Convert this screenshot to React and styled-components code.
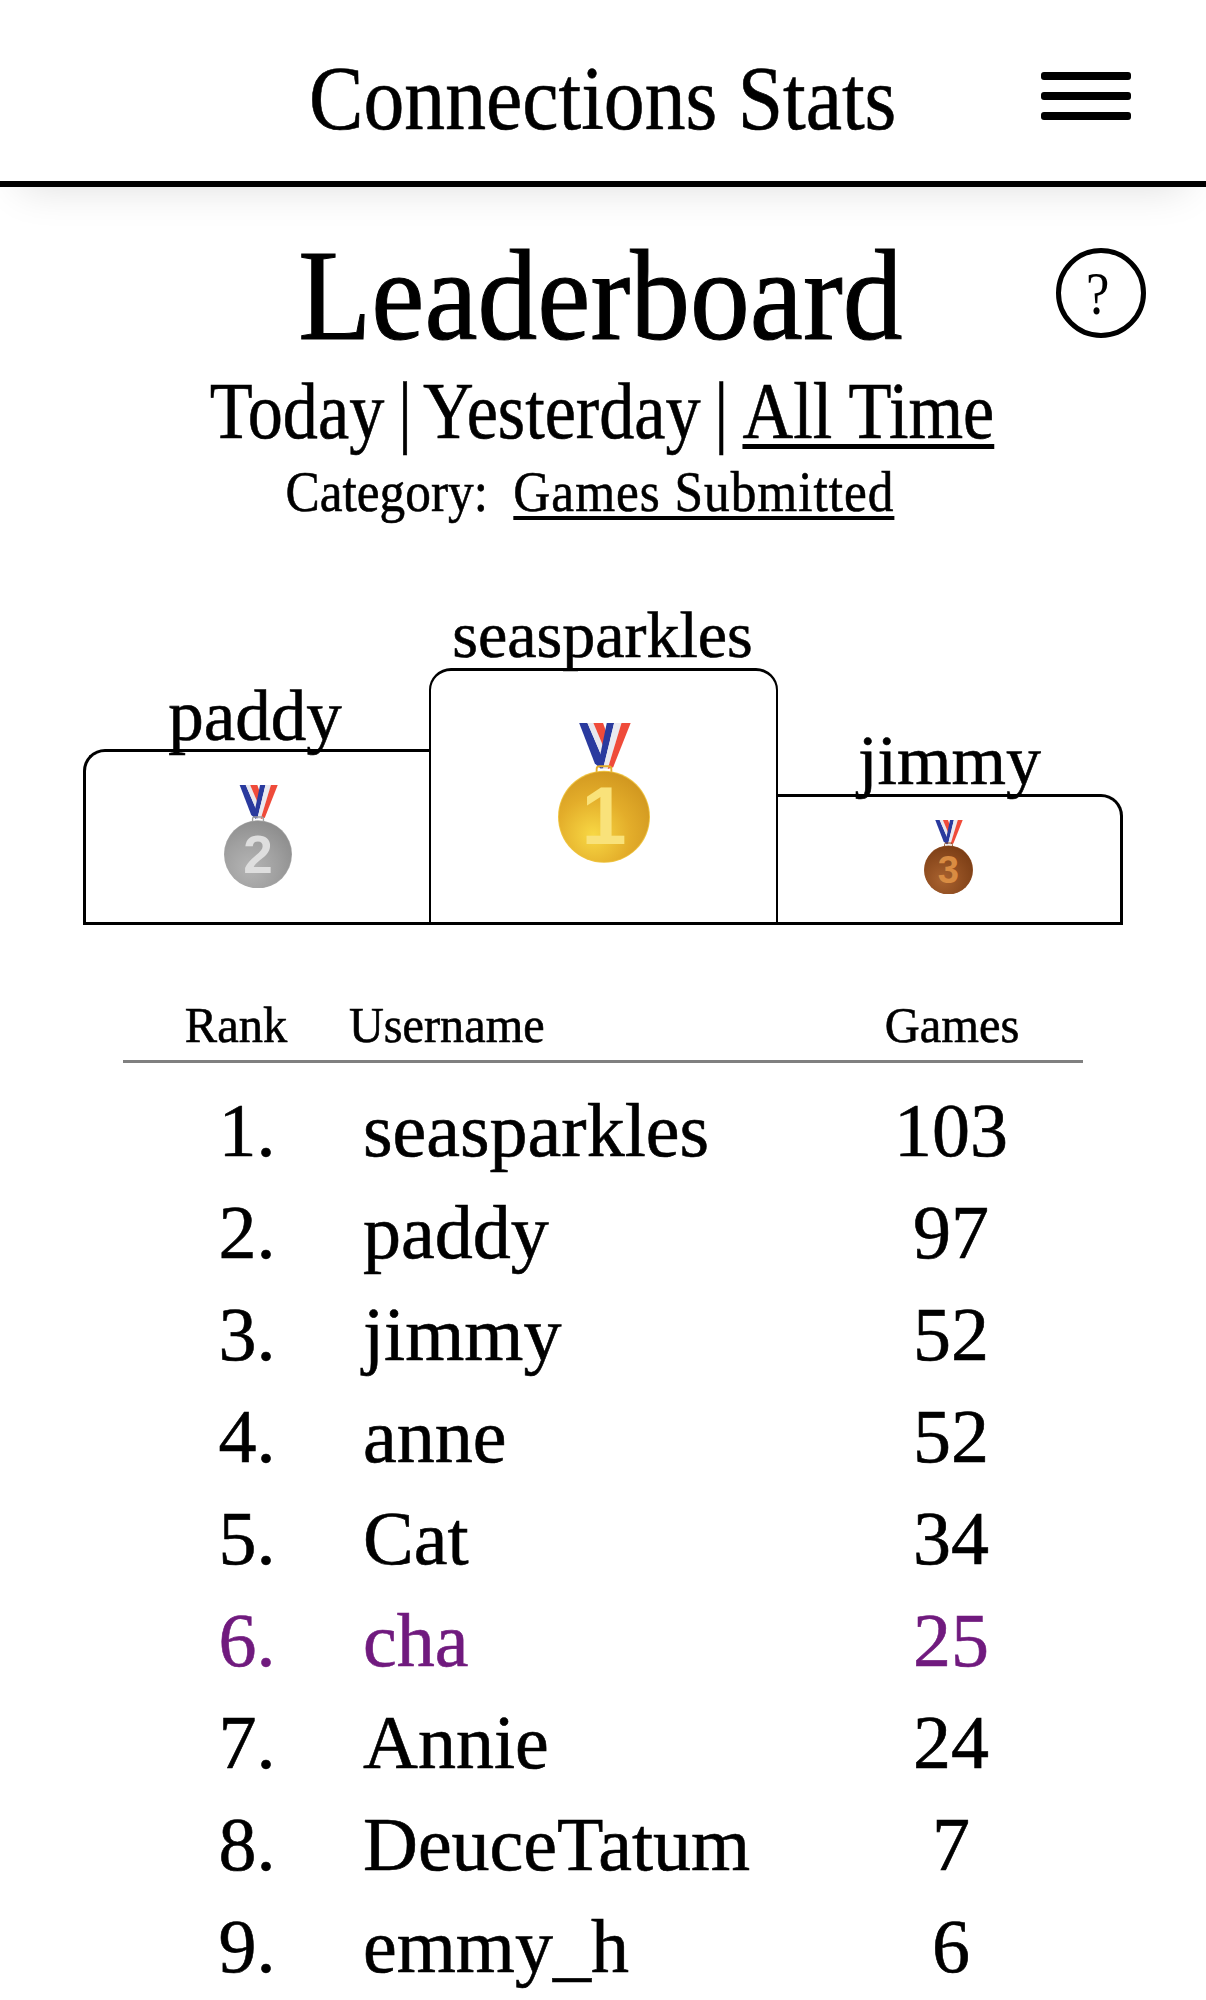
import React from "react";
import styled, { createGlobalStyle } from "styled-components";

const GlobalStyle = createGlobalStyle`
  html, body {
    margin: 0;
    padding: 0;
    background: #fff;
  }
  #root {
    max-height: 2000px;
    overflow: hidden;
  }
`;

const Page = styled.div`
  font-family: "Liberation Serif", "Times New Roman", serif;
  color: #000;
  -webkit-text-stroke: 0.6px currentColor;
`;

const Header = styled.header`
  display: grid;
  grid-template-columns: 1fr auto 1fr;
  align-items: center;
  height: 181px;
  border-bottom: 6px solid #000;
  box-shadow: 0 20px 40px -20px rgba(0, 0, 0, 0.14);
`;

const SiteTitle = styled.div`
  grid-column: 2;
  font-size: 90px;
  line-height: 1;
  padding-top: 16px;
  transform: scaleX(0.907);
`;

const MenuButton = styled.div`
  justify-self: end;
  margin: 10px 75px 0 0;
  display: flex;
  flex-direction: column;
  gap: 12px;
`;

const MenuBar = styled.span`
  display: block;
  width: 90px;
  height: 8px;
  border-radius: 3px;
  background: #000;
`;

const TitleRow = styled.div`
  display: grid;
  grid-template-columns: 1fr auto 1fr;
  align-items: center;
  margin-top: 56px;
`;

const Heading = styled.h1`
  grid-column: 2;
  margin: 0;
  font-weight: 400;
  font-size: 130px;
  line-height: 104px;
  -webkit-text-stroke: 1px #000;
  transform: translateX(-3px) scaleX(0.92);
`;

const HelpButton = styled.div`
  justify-self: end;
  margin-right: 60px;
  box-sizing: border-box;
  width: 90px;
  height: 90px;
  border: 5px solid #000;
  border-radius: 50%;
  display: flex;
  align-items: center;
  justify-content: center;
  transform: translateY(-2px);
`;

const HelpMark = styled.span`
  font-size: 62px;
  line-height: 1;
  transform: translateX(-3px) scaleX(0.85);
  -webkit-text-stroke: 0;
`;

const Tabs = styled.nav`
  text-align: center;
  font-size: 80px;
  line-height: 88px;
  margin-top: 20px;
  transform: translateX(-1px) scaleX(0.878);
`;

const Tab = styled.span`
  text-decoration: ${(p) => (p.$active ? "underline" : "none")};
  text-decoration-thickness: 5px;
  text-underline-offset: 6px;
`;

const Separator = styled.span`
  margin: 0 ${(p) => p.$after}px 0 -4.5px;
`;

const Category = styled.div`
  text-align: center;
  font-size: 57px;
  line-height: 64px;
  margin-top: 5px;
  transform: translateX(-13px) scaleX(0.9);
`;

const CategoryLink = styled.span`
  margin-left: 14px;
  letter-spacing: 1.1px;
  text-decoration: underline;
  text-decoration-thickness: 4px;
  text-underline-offset: 5px;
`;

const Podium = styled.div`
  display: flex;
  align-items: flex-end;
  padding-left: 83px;
  margin-top: 81px;
`;

const Step = styled.div`
  display: flex;
  flex-direction: column;
  align-items: center;
  width: ${(p) => p.$width}px;
`;

const StepName = styled.div`
  position: relative;
  z-index: 1;
  font-size: ${(p) => p.$size}px;
  line-height: 60px;
  margin-bottom: 3px;
  transform: translateX(-1px);
`;

const StepBox = styled.div`
  box-sizing: border-box;
  width: 100%;
  height: ${(p) => p.$height}px;
  border: 3px solid #000;
  border-left-width: ${(p) => (p.$place === 2 ? 3 : p.$place === 1 ? 2 : 0)}px;
  border-right-width: ${(p) => (p.$place === 3 ? 3 : p.$place === 1 ? 2 : 0)}px;
  border-radius: ${(p) =>
    p.$place === 2 ? "22px 0 0 0" : p.$place === 3 ? "0 22px 0 0" : "22px 22px 0 0"};
  display: flex;
  align-items: flex-start;
  justify-content: center;
  padding-top: ${(p) => p.$pad}px;
`;

const MedalSvg = styled.svg`
  display: block;
  width: ${(p) => p.$size}px;
  margin-left: ${(p) => p.$shift}px;
  height: auto;
`;

const Table = styled.div`
  margin: 65px 123px 0;
`;

const ColumnRow = styled.div`
  display: grid;
  grid-template-columns: 226px 510px 1fr;
  align-items: end;
  height: 62px;
  padding-bottom: 8px;
  border-bottom: 3px solid #808080;
  font-size: 50px;
  line-height: 54px;
`;

const RankLabel = styled.div`
  text-align: center;
  transform: scaleX(0.97);
`;

const NameLabel = styled.div`
  transform: scaleX(0.965);
  transform-origin: left;
`;

const GamesLabel = styled.div`
  text-align: center;
  margin-left: -38px;
  transform: scaleX(0.97);
`;

const Rows = styled.div`
  margin-top: 16px;
`;

const Row = styled.div`
  display: grid;
  grid-template-columns: 226px 510px 1fr;
  height: 102px;
  line-height: 102px;
  font-size: 76px;
  color: ${(p) => (p.$me ? "#701a7e" : "#000")};
`;

const RankCell = styled.div`
  text-align: center;
  padding-left: 22px;
`;

const NameCell = styled.div`
  margin-left: 14px;
`;

const GamesCell = styled.div`
  text-align: center;
  margin-left: -40px;
`;

const MEDALS = {
  gold: { hi: "#f8d844", mid: "#e3ad2a", lo: "#d0961f", digit: "#f9e27a", edge: "#efc440" },
  silver: { hi: "#b4b4b4", mid: "#a0a0a0", lo: "#8c8c8c", digit: "#dedede", edge: "#a8a8a8" },
  bronze: { hi: "#a9622f", mid: "#8f4d20", lo: "#7a3d15", digit: "#d98c42", edge: "#9a5a30" },
};

function Medal({ tone, digit, size, shift, digitSize, baseline }) {
  const c = MEDALS[tone];
  return (
    <MedalSvg $size={size} $shift={shift} viewBox="0 0 100 152">
      <defs>
        <radialGradient id={`face-${tone}`} cx="0.38" cy="0.7" r="0.75">
          <stop offset="0" stopColor={c.hi} />
          <stop offset="0.55" stopColor={c.mid} />
          <stop offset="1" stopColor={c.lo} />
        </radialGradient>
      </defs>
      <polygon points="23,0 32,0 50,42 47,50 40,44" fill="#2a3a9e" />
      <polygon points="32,0 38.5,0 52,32 50,42" fill="#e8e8ee" />
      <polygon points="38.5,0 49,0 56,20 52,32" fill="#ef4b3a" />
      <polygon points="53,0 61,0 49,50 44,44" fill="#2a3a9e" />
      <polygon points="61,0 69,0 54,50 49,50" fill="#eaeaf0" />
      <polygon points="69,0 79,0 60,48 54,50" fill="#ef4b3a" />
      <rect x="42" y="47" width="16" height="9" rx="3" fill="none" stroke={c.mid} strokeWidth="2" />
      <circle cx="50" cy="102" r="50" fill={c.edge} />
      <circle cx="50" cy="102" r="49" fill={`url(#face-${tone})`} />
      <text
        x="50"
        y={baseline}
        textAnchor="middle"
        fontFamily="Liberation Sans, Arial, sans-serif"
        fontWeight="700"
        fontSize={digitSize}
        fill={c.digit}
        style={{ WebkitTextStroke: 0 }}
      >
        {digit}
      </text>
    </MedalSvg>
  );
}

const PLAYERS = [
  ["seasparkles", 103],
  ["paddy", 97],
  ["jimmy", 52],
  ["anne", 52],
  ["Cat", 34],
  ["cha", 25],
  ["Annie", 24],
  ["DeuceTatum", 7],
  ["emmy_h", 6],
];

export default function App() {
  return (
    <Page>
      <GlobalStyle />
      <Header>
        <SiteTitle>Connections Stats</SiteTitle>
        <MenuButton>
          <MenuBar />
          <MenuBar />
          <MenuBar />
        </MenuButton>
      </Header>
      <TitleRow>
        <Heading>Leaderboard</Heading>
        <HelpButton>
          <HelpMark>?</HelpMark>
        </HelpButton>
      </TitleRow>
      <Tabs>
        <Tab>Today</Tab> <Separator $after={-4.5}>|</Separator> <Tab>Yesterday</Tab>{" "}
        <Separator $after={0.5}>|</Separator> <Tab $active>All Time</Tab>
      </Tabs>
      <Category>
        Category: <CategoryLink>Games Submitted</CategoryLink>
      </Category>
      <Podium>
        <Step $width={346}>
          <StepName $size={71}>paddy</StepName>
          <StepBox $place={2} $height={176} $pad={33}>
            <Medal tone="silver" digit="2" size={68} shift={0} digitSize={78} baseline={129} />
          </StepBox>
        </Step>
        <Step $width={349}>
          <StepName $size={66}>seasparkles</StepName>
          <StepBox $place={1} $height={257} $pad={52}>
            <Medal tone="gold" digit="1" size={92} shift={0} digitSize={88} baseline={132} />
          </StepBox>
        </Step>
        <Step $width={345}>
          <StepName $size={70}>jimmy</StepName>
          <StepBox $place={3} $height={131} $pad={23}>
            <Medal tone="bronze" digit="3" size={49} shift={-1} digitSize={78} baseline={129} />
          </StepBox>
        </Step>
      </Podium>
      <Table>
        <ColumnRow>
          <RankLabel>Rank</RankLabel>
          <NameLabel>Username</NameLabel>
          <GamesLabel>Games</GamesLabel>
        </ColumnRow>
        <Rows>
          {PLAYERS.map(([name, games], i) => (
            <Row key={name} $me={name === "cha"}>
              <RankCell>{i + 1}.</RankCell>
              <NameCell>{name}</NameCell>
              <GamesCell>{games}</GamesCell>
            </Row>
          ))}
        </Rows>
      </Table>
    </Page>
  );
}
